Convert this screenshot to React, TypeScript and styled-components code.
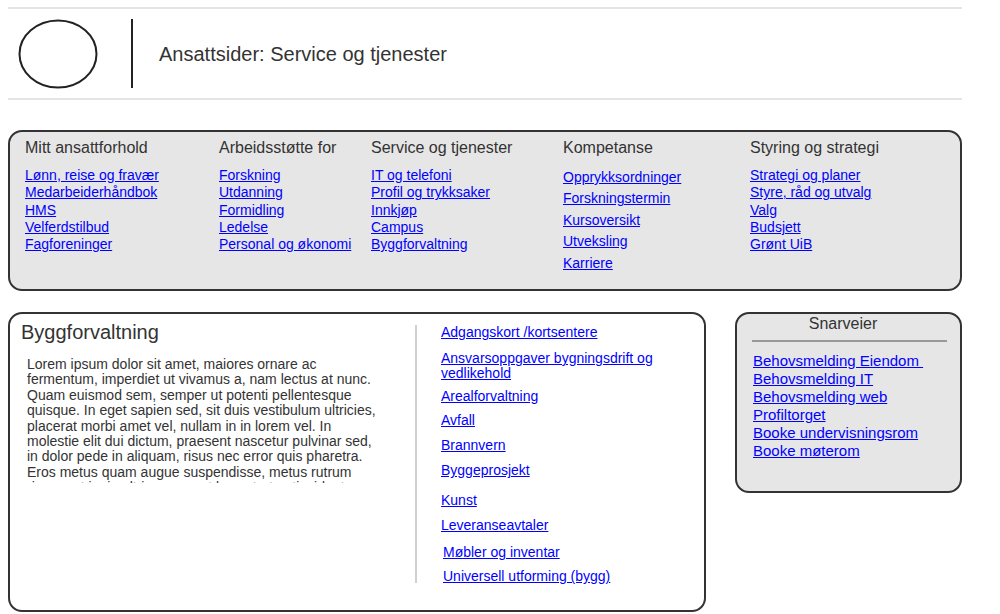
import styled, { createGlobalStyle } from 'styled-components'

const GlobalStyle = createGlobalStyle`
  html, body {
    margin: 0;
    padding: 0;
    background: #ffffff;
  }
  body {
    font-family: "Liberation Sans", Arial, sans-serif;
    color: #333333;
  }
  * {
    box-sizing: border-box;
  }
`

type NavColumn = {
  title: string
  spacing: number
  links: string[]
}

const NAV_COLUMNS: NavColumn[] = [
  {
    title: 'Mitt ansattforhold',
    spacing: 17.25,
    links: ['Lønn, reise og fravær', 'Medarbeiderhåndbok', 'HMS', 'Velferdstilbud', 'Fagforeninger'],
  },
  {
    title: 'Arbeidsstøtte for',
    spacing: 17.25,
    links: ['Forskning', 'Utdanning', 'Formidling', 'Ledelse', 'Personal og økonomi'],
  },
  {
    title: 'Service og tjenester',
    spacing: 17.25,
    links: ['IT og telefoni', 'Profil og trykksaker', 'Innkjøp', 'Campus', 'Byggforvaltning'],
  },
  {
    title: 'Kompetanse',
    spacing: 21.4,
    links: ['Opprykksordninger', 'Forskningstermin', 'Kursoversikt', 'Utveksling', 'Karriere'],
  },
  {
    title: 'Styring og strategi',
    spacing: 17.25,
    links: ['Strategi og planer', 'Styre, råd og utvalg', 'Valg', 'Budsjett', 'Grønt UiB'],
  },
]

const BYGG_LINKS = [
  { label: 'Adgangskort /kortsentere', gap: 0, indent: 0 },
  { label: 'Ansvarsoppgaver bygningsdrift og vedlikehold', gap: 11, indent: 0 },
  { label: 'Arealforvaltning', gap: 7.5, indent: 0 },
  { label: 'Avfall', gap: 9.3, indent: 0 },
  { label: 'Brannvern', gap: 10, indent: 0 },
  { label: 'Byggeprosjekt', gap: 10.7, indent: 0 },
  { label: 'Kunst', gap: 14.3, indent: 0 },
  { label: 'Leveranseavtaler', gap: 10.7, indent: 0 },
  { label: 'Møbler og inventar', gap: 11.6, indent: 2 },
  { label: 'Universell utforming (bygg)', gap: 9.4, indent: 2 },
]

const SHORTCUTS = [
  'Behovsmelding Eiendom\u00a0',
  'Behovsmelding IT',
  'Behovsmelding web',
  'Profiltorget',
  'Booke undervisningsrom',
  'Booke møterom',
]

const LOREM =
  'Lorem ipsum dolor sit amet, maiores ornare ac fermentum, imperdiet ut vivamus a, nam lectus at nunc. Quam euismod sem, semper ut potenti pellentesque quisque. In eget sapien sed, sit duis vestibulum ultricies, placerat morbi amet vel, nullam in in lorem vel. In molestie elit dui dictum, praesent nascetur pulvinar sed, in dolor pede in aliquam, risus nec error quis pharetra. Eros metus quam augue suspendisse, metus rutrum risus erat in, in ultrices sem et lacus tortor, tincidunt vestibulum at nulla.'

const App = () => {
  return (
    <Page>
      <GlobalStyle />
      <Header>
        <LogoMark width="80" height="70" viewBox="0 0 80 70">
          <ellipse cx="40" cy="35" rx="38.5" ry="33.5" fill="none" stroke="#222" strokeWidth="2" />
        </LogoMark>
        <HeaderBar />
        <HeaderTitle>Ansattsider: Service og tjenester</HeaderTitle>
      </Header>

      <NavBox>
        {NAV_COLUMNS.map((col) => (
          <NavCol key={col.title}>
            <NavTitle>{col.title}</NavTitle>
            <NavList $spacing={col.spacing}>
              {col.links.map((link) => (
                <li key={link}>
                  <TextLink href="#">{link}</TextLink>
                </li>
              ))}
            </NavList>
          </NavCol>
        ))}
      </NavBox>

      <ContentRow>
        <MainBox>
          <LeftPane>
            <MainTitle>Byggforvaltning</MainTitle>
            <Lorem>{LOREM}</Lorem>
          </LeftPane>
          <Divider />
          <RightPane>
            {BYGG_LINKS.map((item) => (
              <ByggItem key={item.label} $gap={item.gap} $indent={item.indent}>
                <TextLink href="#">{item.label}</TextLink>
              </ByggItem>
            ))}
          </RightPane>
        </MainBox>

        <SideBox>
          <SideTitle>Snarveier</SideTitle>
          <SideRule />
          <SideList>
            {SHORTCUTS.map((s) => (
              <li key={s}>
                <TextLink href="#">{s}</TextLink>
              </li>
            ))}
          </SideList>
        </SideBox>
      </ContentRow>
    </Page>
  )
}

export default App

/* ****************************************************************
  Ansattsider wireframe
*******************************************************************/

const Page = styled.div`
  width: 1000px;
  padding: 7px 38px 0 8px;
`

const Header = styled.header`
  display: flex;
  align-items: center;
  height: 93px;
  padding-left: 10px;
  border-top: 2px solid #e4e4e4;
  border-bottom: 2px solid #e4e4e4;
`

const LogoMark = styled.svg`
  display: block;
  flex-shrink: 0;
`

const HeaderBar = styled.div`
  width: 2px;
  height: 69px;
  margin-left: 33px;
  background: #222;
`

const HeaderTitle = styled.h1`
  margin: 0 0 0 26px;
  font-size: 20px;
  font-weight: 400;
  line-height: 24px;
  color: #333;
`

const TextLink = styled.a`
  color: #0000ff;
  text-decoration: underline;
`

const NavBox = styled.nav`
  display: grid;
  grid-template-columns: 194px 152px 192px 187px 1fr;
  height: 161px;
  margin-top: 30px;
  padding: 7px 0 0 15px;
  background: #e6e6e6;
  border: 2px solid #333;
  border-radius: 14px;
`

const NavCol = styled.div`
  display: flex;
  flex-direction: column;
`

const NavTitle = styled.h2`
  margin: 0;
  font-size: 16px;
  font-weight: 400;
  line-height: 18px;
  color: #333;
`

const NavList = styled.ul<{ $spacing: number }>`
  margin: 10px 0 0;
  padding: 0;
  list-style: none;
  font-size: 14px;
  line-height: ${(p) => p.$spacing}px;
  white-space: nowrap;
`

const ContentRow = styled.div`
  display: flex;
  align-items: flex-start;
  gap: 29px;
  margin-top: 21px;
`

const MainBox = styled.section`
  display: flex;
  width: 698px;
  height: 300px;
  background: #fff;
  border: 2px solid #333;
  border-radius: 14px;
`

const LeftPane = styled.div`
  width: 405px;
  padding: 6px 0 0 11px;
`

const MainTitle = styled.h2`
  margin: 0;
  font-size: 20px;
  font-weight: 400;
  line-height: 24px;
  color: #333;
`

const Lorem = styled.p`
  width: 356px;
  height: 126px;
  margin: 13px 0 0 6px;
  overflow: hidden;
  font-size: 14px;
  line-height: 15.4px;
  color: #333;
`

const Divider = styled.div`
  flex-shrink: 0;
  width: 2px;
  height: 258px;
  margin-top: 11px;
  background: #d0d0d0;
`

const RightPane = styled.ul`
  width: 240px;
  margin: 0;
  padding: 11px 0 0 24px;
  list-style: none;
  font-size: 14px;
  line-height: 15px;
`

const ByggItem = styled.li<{ $gap: number; $indent: number }>`
  margin-top: ${(p) => p.$gap}px;
  padding-left: ${(p) => p.$indent}px;
`

const SideBox = styled.aside`
  width: 227px;
  height: 181px;
  padding: 1px 13px 0 15px;
  background: #e6e6e6;
  border: 2px solid #333;
  border-radius: 14px;
`

const SideTitle = styled.h3`
  margin: 0;
  padding-right: 13px;
  text-align: center;
  font-size: 16px;
  font-weight: 400;
  line-height: 18px;
  color: #333;
`

const SideRule = styled.div`
  height: 2px;
  margin-top: 7px;
  background: #999;
`

const SideList = styled.ul`
  margin: 10px 0 0;
  padding: 0 0 0 1px;
  list-style: none;
  font-size: 15px;
  line-height: 18px;
  white-space: nowrap;
`
